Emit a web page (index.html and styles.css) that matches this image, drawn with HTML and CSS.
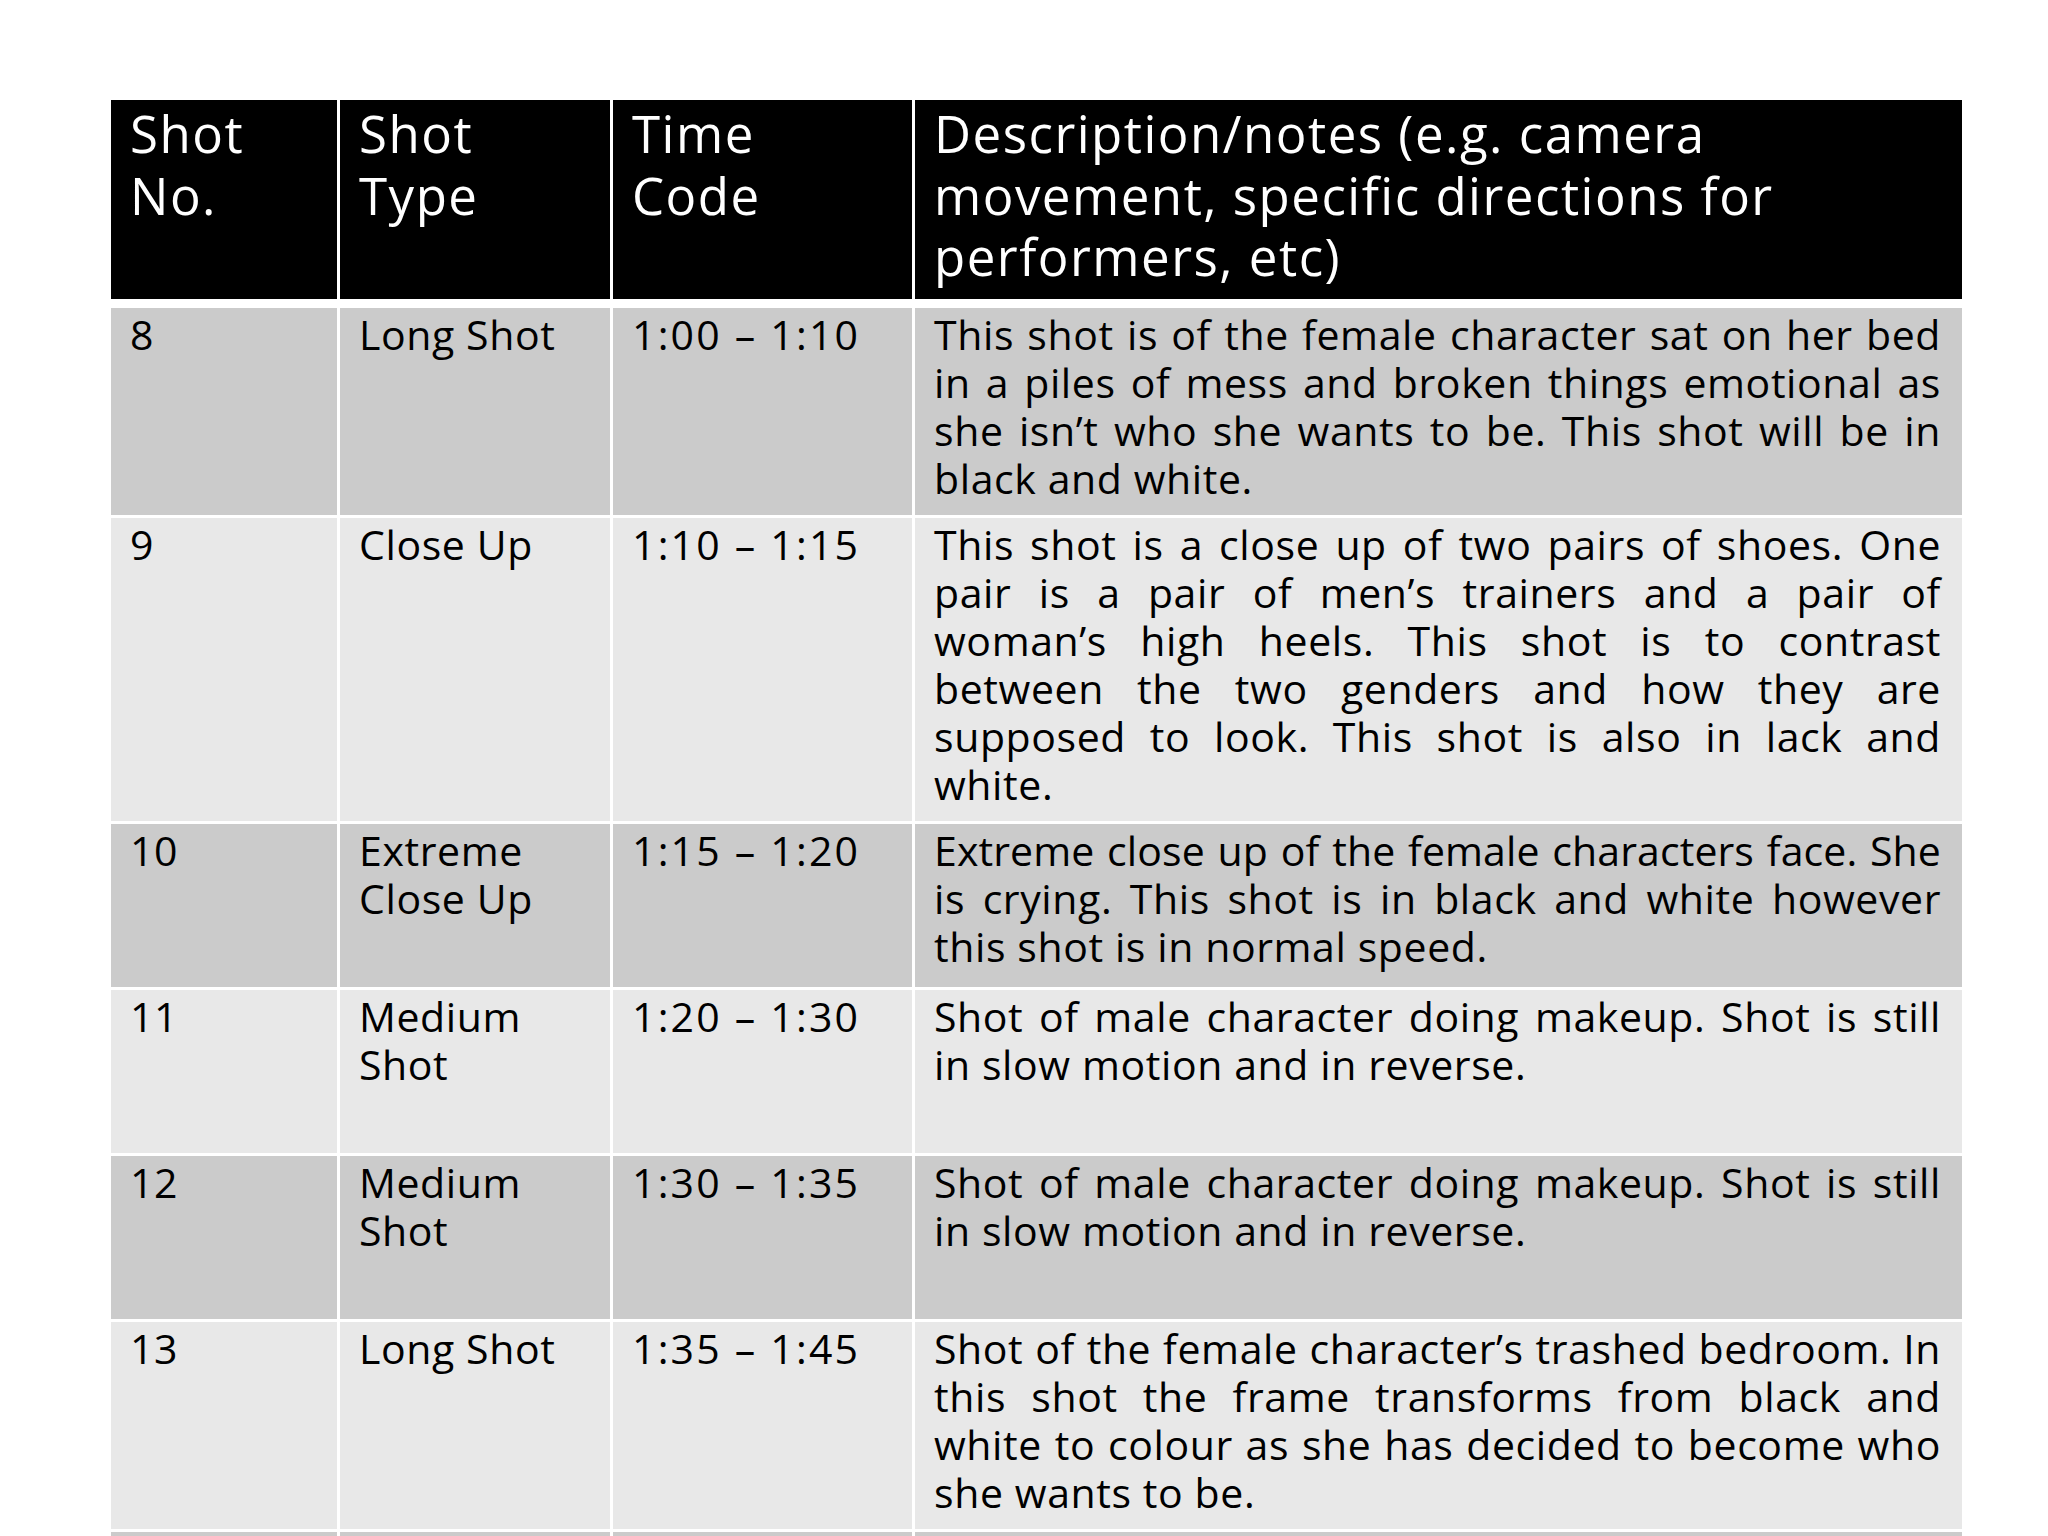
FILE: index.html
```html
<!DOCTYPE html>
<html lang="en">
<head>
<meta charset="utf-8">
<title>Shot list</title>
<link rel="stylesheet" href="styles.css">
</head>
<body>
<div class="sheet">
  <div class="row head">
    <div class="cell">Shot<br>No.</div>
    <div class="cell">Shot<br>Type</div>
    <div class="cell">Time<br>Code</div>
    <div class="cell">Description/notes (e.g. camera<br>movement, specific directions for<br>performers, etc)</div>
  </div>

  <div class="row dark">
    <div class="cell">8</div>
    <div class="cell">Long Shot</div>
    <div class="cell time">1:00 – 1:10</div>
    <div class="cell desc">
      <span class="ln">This shot is of the female character sat on her bed</span>
      <span class="ln">in a piles of mess and broken things emotional as</span>
      <span class="ln">she isn’t who she wants to be. This shot will be in</span>
      <span class="ln last">black and white.</span>
    </div>
  </div>

  <div class="row light">
    <div class="cell">9</div>
    <div class="cell">Close Up</div>
    <div class="cell time">1:10 – 1:15</div>
    <div class="cell desc">
      <span class="ln">This shot is a close up of two pairs of shoes. One</span>
      <span class="ln">pair is a pair of men’s trainers and a pair of</span>
      <span class="ln">woman’s high heels. This shot is to contrast</span>
      <span class="ln">between the two genders and how they are</span>
      <span class="ln">supposed to look. This shot is also in lack and</span>
      <span class="ln last">white.</span>
    </div>
  </div>

  <div class="row dark short">
    <div class="cell">10</div>
    <div class="cell">Extreme<br>Close Up</div>
    <div class="cell time">1:15 – 1:20</div>
    <div class="cell desc">
      <span class="ln tight">Extreme close up of the female characters face. She</span>
      <span class="ln">is crying. This shot is in black and white however</span>
      <span class="ln last">this shot is in normal speed.</span>
    </div>
  </div>

  <div class="row light short">
    <div class="cell">11</div>
    <div class="cell">Medium<br>Shot</div>
    <div class="cell time">1:20 – 1:30</div>
    <div class="cell desc">
      <span class="ln">Shot of male character doing makeup. Shot is still</span>
      <span class="ln last">in slow motion and in reverse.</span>
    </div>
  </div>

  <div class="row dark short">
    <div class="cell">12</div>
    <div class="cell">Medium<br>Shot</div>
    <div class="cell time">1:30 – 1:35</div>
    <div class="cell desc">
      <span class="ln">Shot of male character doing makeup. Shot is still</span>
      <span class="ln last">in slow motion and in reverse.</span>
    </div>
  </div>

  <div class="row light">
    <div class="cell">13</div>
    <div class="cell">Long Shot</div>
    <div class="cell time">1:35 – 1:45</div>
    <div class="cell desc">
      <span class="ln">Shot of the female character’s trashed bedroom. In</span>
      <span class="ln">this shot the frame transforms from black and</span>
      <span class="ln">white to colour as she has decided to become who</span>
      <span class="ln last">she wants to be.</span>
    </div>
  </div>

  <div class="row dark short">
    <div class="cell"></div>
    <div class="cell"></div>
    <div class="cell"></div>
    <div class="cell"></div>
  </div>
</div>
</body>
</html>
```

FILE: styles.css
```css
html, body {
  margin: 0;
  padding: 0;
  background: #ffffff;
  height: 1536px;
  overflow: hidden;
}

.sheet {
  margin: 100px 0 0 111px;
  width: 1851px;
  display: flex;
  flex-direction: column;
  gap: 3px;
}

.row {
  display: grid;
  grid-template-columns: 226px 270px 299px minmax(0, 1fr);
  column-gap: 3px;
}

.cell {
  box-sizing: border-box;
  font-family: "Open Sans", "Noto Sans", sans-serif;
  color: #000;
}

.head {
  margin-bottom: 6px;
}

.head .cell {
  background: #000;
  color: #fff;
  height: 199px;
  font-size: 51px;
  font-weight: 500;
  letter-spacing: 1.5px;
  line-height: 61.5px;
  padding: 3px 19px 0 19px;
}

.dark .cell { background: #cbcbcb; }
.light .cell { background: #e8e8e8; }

.dark .cell, .light .cell {
  font-size: 41px;
  line-height: 48px;
  letter-spacing: 0.6px;
  padding: 2px 21px 13px 19px;
}

.row .cell.time {
  letter-spacing: 2.2px;
}

.short .cell {
  min-height: 163px;
}

.desc .ln {
  display: block;
  text-align: justify;
  text-align-last: justify;
  white-space: nowrap;
}

.desc .ln.tight {
  letter-spacing: 0.1px;
}

.desc .ln.last {
  text-align-last: left;
}
```
